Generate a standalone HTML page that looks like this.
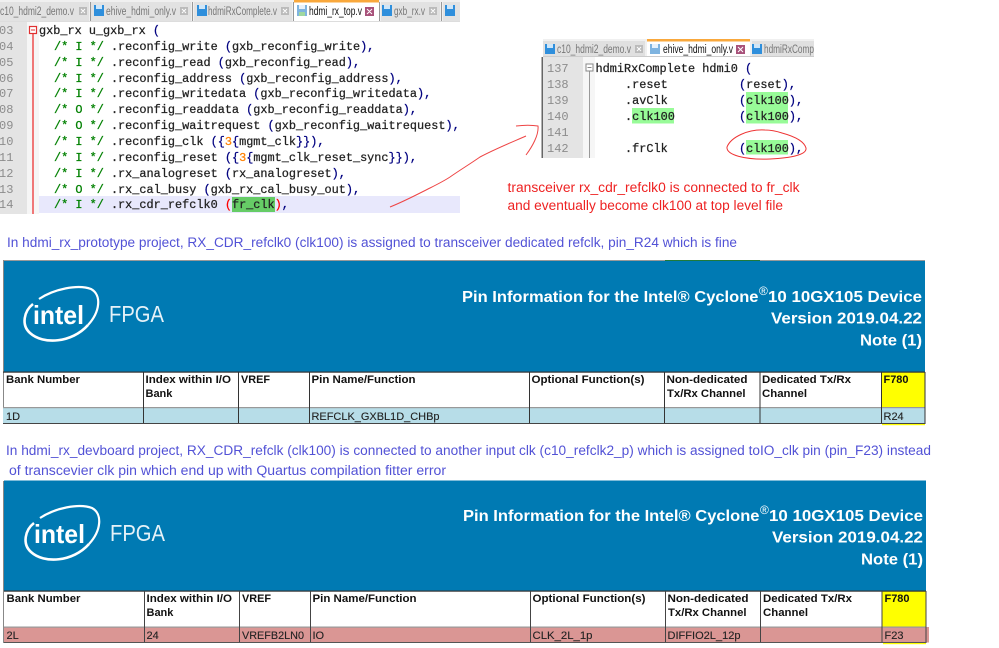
<!DOCTYPE html>
<html>
<head>
<meta charset="utf-8">
<style>
html,body{margin:0;padding:0;background:#fff;width:999px;height:648px;overflow:hidden}
svg{display:block;filter:blur(.3px)}
.m{font-family:"Liberation Mono",monospace;font-size:11.87px;fill:#222;stroke:#222;stroke-width:.25}
.c{fill:#008000;stroke:#008000}
.p{fill:#000080;stroke:#000080;stroke-width:.25}
.o{fill:#ff8000;stroke:#ff8000}
.n{font-family:"Liberation Mono",monospace;font-size:12px;fill:#8c8c8c}
.t{font-family:"Liberation Sans",sans-serif;font-size:11.5px;fill:#777}
.ta{font-family:"Liberation Sans",sans-serif;font-size:11.5px;fill:#111}
.r{font-family:"Liberation Sans",sans-serif;font-size:13.5px;fill:#ee2222}
.b{font-family:"Liberation Sans",sans-serif;font-size:13.5px;fill:#5252d6}
.h{font-family:"Liberation Sans",sans-serif;font-size:11px;font-weight:bold;fill:#111}
.d{font-family:"Liberation Sans",sans-serif;font-size:11px;fill:#222;stroke:#222;stroke-width:.12}
.w{font-family:"Liberation Sans",sans-serif;font-size:15.5px;font-weight:bold;fill:#fff}
.s{font-family:"Liberation Sans",sans-serif;font-size:12px;fill:#fff}
</style>
</head>
<body>
<svg width="999" height="648" viewBox="0 0 999 648" xmlns="http://www.w3.org/2000/svg">
<rect width="999" height="648" fill="#fff"/>

<!-- panel 1 tabs -->
<rect x="0" y="0" width="460" height="21" fill="#f0f0f0"/>
<rect x="0" y="2" width="89" height="19" fill="#e2e2e2"/>
<rect x="91" y="2" width="100" height="19" fill="#e2e2e2"/>
<rect x="194" y="2" width="98" height="19" fill="#e2e2e2"/>
<rect x="294" y="0" width="85" height="21" fill="#fff"/>
<rect x="294" y="0" width="85" height="2.5" fill="#f9a83c"/>
<rect x="381" y="2" width="59" height="19" fill="#e2e2e2"/>
<rect x="443" y="2" width="17" height="19" fill="#e2e2e2"/>
<g fill="#999"><rect x="90" y="2" width="1" height="19"/><rect x="192" y="2" width="1" height="19"/><rect x="293" y="2" width="1" height="19"/><rect x="379" y="2" width="1" height="19"/><rect x="441" y="2" width="1" height="19"/></g>
<rect x="94" y="5" width="10" height="11" fill="#2f8fdc"/><rect x="96" y="5" width="6" height="4" fill="#cfe6f8"/>
<rect x="197" y="5" width="10" height="11" fill="#2f8fdc"/><rect x="199" y="5" width="6" height="4" fill="#cfe6f8"/>
<rect x="297" y="5" width="10" height="11" fill="#7fb4e0"/><rect x="299" y="5" width="6" height="4" fill="#e8f2fb"/><rect x="299" y="12" width="6" height="4" fill="#9fd89f"/>
<rect x="382" y="5" width="10" height="11" fill="#2f8fdc"/><rect x="384" y="5" width="6" height="4" fill="#cfe6f8"/>
<rect x="445" y="5" width="10" height="11" fill="#2f8fdc"/><rect x="447" y="5" width="6" height="4" fill="#cfe6f8"/>
<text class="t" x="0" y="15" textLength="74" lengthAdjust="spacingAndGlyphs">c10_hdmi2_demo.v</text>
<text class="t" x="106" y="15" textLength="70" lengthAdjust="spacingAndGlyphs">ehive_hdmi_only.v</text>
<text class="t" x="208" y="15" textLength="69" lengthAdjust="spacingAndGlyphs">hdmiRxComplete.v</text>
<text class="ta" x="309" y="15" textLength="53" lengthAdjust="spacingAndGlyphs">hdmi_rx_top.v</text>
<text class="t" x="394" y="15" textLength="31" lengthAdjust="spacingAndGlyphs">gxb_rx.v</text>
<g fill="#bbb"><rect x="79" y="7" width="8" height="8"/><rect x="180" y="7" width="8" height="8"/><rect x="281" y="7" width="8" height="8"/><rect x="429" y="7" width="8" height="8"/></g>
<rect x="365" y="7" width="9" height="9" fill="#a8527a"/>
<g stroke="#fff" stroke-width="1"><path d="M81 9l4 4M85 9l-4 4M182 9l4 4M186 9l-4 4M283 9l4 4M287 9l-4 4M431 9l4 4M435 9l-4 4M367 9l5 5M372 9l-5 5"/></g>
<rect x="0" y="21" width="460" height="1" fill="#ddd"/>

<!-- panel 1 code -->
<rect x="0" y="22" width="27" height="192" fill="#e4e4e4"/>
<rect x="27" y="22" width="12" height="192" fill="#f6f6f6"/>
<rect x="39" y="196" width="421" height="17" fill="#e8e8fc"/>
<rect x="232" y="197" width="43" height="15" fill="#66cc66"/>
<rect x="32" y="34" width="2" height="180" fill="#f07878"/>
<rect x="29.5" y="26.5" width="7" height="7" fill="#fff" stroke="#e03030" stroke-width="1.2"/>
<rect x="31" y="29.5" width="4" height="1" fill="#e03030"/>
<text class="n" x="-1" y="34">03</text><text class="n" x="-1" y="50">04</text><text class="n" x="-1" y="66">05</text><text class="n" x="-1" y="82">06</text><text class="n" x="-1" y="97">07</text><text class="n" x="-1" y="113">08</text><text class="n" x="-1" y="129">09</text><text class="n" x="-1" y="145">10</text><text class="n" x="-1" y="161">11</text><text class="n" x="-1" y="177">12</text><text class="n" x="-1" y="193">13</text><text class="n" x="-1" y="208">14</text>
<text class="m" x="39" y="34" xml:space="preserve">gxb_rx u_gxb_rx <tspan class="p">(</tspan></text>
<text class="m" x="54" y="50" xml:space="preserve"><tspan class="c">/* I */</tspan> .reconfig_write <tspan class="p">(</tspan>gxb_reconfig_write<tspan class="p">),</tspan></text>
<text class="m" x="54" y="66" xml:space="preserve"><tspan class="c">/* I */</tspan> .reconfig_read <tspan class="p">(</tspan>gxb_reconfig_read<tspan class="p">),</tspan></text>
<text class="m" x="54" y="82" xml:space="preserve"><tspan class="c">/* I */</tspan> .reconfig_address <tspan class="p">(</tspan>gxb_reconfig_address<tspan class="p">),</tspan></text>
<text class="m" x="54" y="97" xml:space="preserve"><tspan class="c">/* I */</tspan> .reconfig_writedata <tspan class="p">(</tspan>gxb_reconfig_writedata<tspan class="p">),</tspan></text>
<text class="m" x="54" y="113" xml:space="preserve"><tspan class="c">/* O */</tspan> .reconfig_readdata <tspan class="p">(</tspan>gxb_reconfig_readdata<tspan class="p">),</tspan></text>
<text class="m" x="54" y="129" xml:space="preserve"><tspan class="c">/* O */</tspan> .reconfig_waitrequest <tspan class="p">(</tspan>gxb_reconfig_waitrequest<tspan class="p">),</tspan></text>
<text class="m" x="54" y="145" xml:space="preserve"><tspan class="c">/* I */</tspan> .reconfig_clk <tspan class="p">({</tspan><tspan class="o">3</tspan><tspan class="p">{</tspan>mgmt_clk<tspan class="p">}}),</tspan></text>
<text class="m" x="54" y="161" xml:space="preserve"><tspan class="c">/* I */</tspan> .reconfig_reset <tspan class="p">({</tspan><tspan class="o">3</tspan><tspan class="p">{</tspan>mgmt_clk_reset_sync<tspan class="p">}}),</tspan></text>
<text class="m" x="54" y="177" xml:space="preserve"><tspan class="c">/* I */</tspan> .rx_analogreset <tspan class="p">(</tspan>rx_analogreset<tspan class="p">),</tspan></text>
<text class="m" x="54" y="193" xml:space="preserve"><tspan class="c">/* O */</tspan> .rx_cal_busy <tspan class="p">(</tspan>gxb_rx_cal_busy_out<tspan class="p">),</tspan></text>
<text class="m" x="54" y="208" xml:space="preserve"><tspan class="c">/* I */</tspan> .rx_cdr_refclk0 <tspan style="fill:#f00;stroke:#f00">(</tspan>fr_clk<tspan style="fill:#f00;stroke:#f00">)</tspan><tspan class="p">,</tspan></text>

<!-- panel 2 tabs -->
<rect x="543" y="39" width="271" height="17" fill="#f0f0f0"/>
<rect x="543" y="41" width="102" height="15" fill="#e0e0e0"/>
<rect x="647" y="39" width="103" height="17" fill="#fff"/>
<rect x="647" y="39" width="103" height="2.5" fill="#f9a83c"/>
<rect x="752" y="41" width="62" height="15" fill="#e0e0e0"/>
<rect x="545" y="44" width="10" height="10" fill="#2f8fdc"/><rect x="547" y="44" width="6" height="4" fill="#cfe6f8"/>
<rect x="650" y="44" width="10" height="10" fill="#7fb4e0"/><rect x="652" y="44" width="6" height="4" fill="#e8f2fb"/>
<rect x="752" y="44" width="10" height="10" fill="#2f8fdc"/><rect x="754" y="44" width="6" height="4" fill="#cfe6f8"/>
<text class="t" x="557" y="53" textLength="74" lengthAdjust="spacingAndGlyphs">c10_hdmi2_demo.v</text>
<text class="ta" x="663" y="53" textLength="70" lengthAdjust="spacingAndGlyphs">ehive_hdmi_only.v</text>
<text class="t" x="764" y="53" textLength="50" lengthAdjust="spacingAndGlyphs">hdmiRxComp</text>
<rect x="635" y="45" width="8" height="8" fill="#bbb"/>
<rect x="736" y="45" width="9" height="9" fill="#a8527a"/>
<path d="M637 47l4 4M641 47l-4 4M738 47l5 5M743 47l-5 5" stroke="#fff" stroke-width="1"/>

<!-- panel 2 code -->
<rect x="542" y="57" width="41" height="101" fill="#e4e4e4"/>
<rect x="583" y="57" width="12" height="101" fill="#f6f6f6"/>
<rect x="541.5" y="57" width="1.5" height="101" fill="#666"/>
<rect x="543" y="56" width="271" height="1" fill="#ccc"/>
<rect x="589" y="71" width="1" height="87" fill="#999"/>
<rect x="586" y="64" width="7" height="7" fill="#fff" stroke="#888" stroke-width="1"/>
<rect x="587.5" y="67" width="4" height="1" fill="#888"/>
<rect x="746" y="92" width="42" height="16" fill="#98fb98"/>
<rect x="746" y="108" width="42" height="15.5" fill="#98fb98"/>
<rect x="632" y="108" width="42" height="15.5" fill="#98fb98"/>
<rect x="746" y="140" width="42" height="14.5" fill="#98fb98"/>
<text class="n" x="547" y="72">137</text><text class="n" x="547" y="88">138</text><text class="n" x="547" y="104">139</text><text class="n" x="547" y="120">140</text><text class="n" x="547" y="136">141</text><text class="n" x="547" y="152">142</text>
<text class="m" x="595.5" y="72" xml:space="preserve">hdmiRxComplete hdmi0 <tspan class="p">(</tspan></text>
<text class="m" x="625" y="88">.reset</text>
<text class="m" x="739" y="88" xml:space="preserve"><tspan class="p">(</tspan>reset<tspan class="p">),</tspan></text>
<text class="m" x="625" y="104">.avClk</text>
<text class="m" x="739" y="104" xml:space="preserve"><tspan class="p">(</tspan>clk100<tspan class="p">),</tspan></text>
<text class="m" x="625" y="120">.clk100</text>
<text class="m" x="739" y="120" xml:space="preserve"><tspan class="p">(</tspan>clk100<tspan class="p">),</tspan></text>
<text class="m" x="625" y="152">.frClk</text>
<text class="m" x="739" y="152" xml:space="preserve"><tspan class="p">(</tspan>clk100<tspan class="p">),</tspan></text>

<!-- red annotations -->
<path d="M390 207C405 201 418 194 430 188C438 184 444 181 450 177C460 170 470 164 480 157C495 149 510 143 526 136" fill="none" stroke="#ee4444" stroke-width="1"/>
<path d="M516 126C524 125 532 125 538 126C539 135 532 147 526 155" fill="none" stroke="#ee4444" stroke-width="1"/>
<path d="M765 130C748 129 731 137 727 147C726 155 745 160 770 159C790 158 807 155 806 148C804 141 793 136 782 133C776 131 770 130 765 130Z" fill="none" stroke="#ee3333" stroke-width="1"/>
<text class="r" x="507.5" y="192" textLength="292" lengthAdjust="spacingAndGlyphs">transceiver rx_cdr_refclk0 is connected to fr_clk</text>
<text class="r" x="507.5" y="210" textLength="275.5" lengthAdjust="spacingAndGlyphs">and eventually become clk100 at top level file</text>

<text class="b" x="7" y="247" textLength="730" lengthAdjust="spacingAndGlyphs">In hdmi_rx_prototype project, RX_CDR_refclk0 (clk100) is assigned to transceiver dedicated refclk, pin_R24 which is fine</text>

<!-- table 1 -->
<rect x="3" y="260" width="922" height="1.5" fill="#999"/>
<rect x="665" y="260" width="95" height="1.5" fill="#1f7a3a"/>
<rect x="3" y="261" width="922" height="111" fill="#007ab3"/>
<rect x="3" y="260" width="1" height="164" fill="#888"/>
<path d="M33 304C24 311 21 325 30 333C43 345 72 343 88 325" fill="none" stroke="#fff" stroke-width="2.6"/>
<path d="M39 299C54 289 78 284 91 289C102 295 100 312 88 325" fill="none" stroke="#fff" stroke-width="2.2"/>
<text x="33" y="324" font-family="Liberation Sans,sans-serif" font-size="26" font-weight="bold" fill="#fff" textLength="51" lengthAdjust="spacingAndGlyphs">intel</text>
<text x="109" y="322" font-family="Liberation Sans,sans-serif" font-size="23" fill="#e6f2f8" textLength="55" lengthAdjust="spacingAndGlyphs">FPGA</text>
<text class="w" x="462" y="302" textLength="296.5" lengthAdjust="spacingAndGlyphs">Pin Information for the Intel® Cyclone</text>
<text class="s" x="759" y="295">®</text>
<text class="w" x="768" y="302" textLength="154" lengthAdjust="spacingAndGlyphs">10 10GX105 Device</text>
<text class="w" x="771" y="323.5" textLength="151" lengthAdjust="spacingAndGlyphs">Version 2019.04.22</text>
<text class="w" x="860" y="345.5" textLength="62" lengthAdjust="spacingAndGlyphs">Note (1)</text>

<rect x="881" y="372" width="44" height="35" fill="#ffff00"/>
<rect x="3" y="407.5" width="922" height="16" fill="#b7dde8"/>
<rect x="3" y="371.5" width="922" height="1.2" fill="#333"/>
<rect x="3" y="407" width="922" height="1.2" fill="#999"/>
<g fill="#333">
<rect x="143" y="372" width="1" height="52"/><rect x="238" y="372" width="1" height="52"/><rect x="309" y="372" width="1" height="52"/><rect x="529" y="372" width="1" height="52"/><rect x="664" y="372" width="1" height="52"/><rect x="759.5" y="372" width="1" height="52"/><rect x="881" y="372" width="1" height="52"/><rect x="924.5" y="372" width="1" height="52"/>
</g>
<rect x="3" y="423" width="922" height="1" fill="#444"/>
<rect x="882" y="424" width="43" height="1.2" fill="#ffff00"/>
<text class="h" x="6" y="383" textLength="74" lengthAdjust="spacingAndGlyphs">Bank Number</text>
<text class="h" x="145.5" y="383" textLength="85.5" lengthAdjust="spacingAndGlyphs">Index within I/O</text>
<text class="h" x="145.5" y="397">Bank</text>
<text class="h" x="241" y="383" textLength="29" lengthAdjust="spacingAndGlyphs">VREF</text>
<text class="h" x="311.5" y="383" textLength="104" lengthAdjust="spacingAndGlyphs">Pin Name/Function</text>
<text class="h" x="531.5" y="383" textLength="113" lengthAdjust="spacingAndGlyphs">Optional Function(s)</text>
<text class="h" x="666.5" y="383" textLength="81" lengthAdjust="spacingAndGlyphs">Non-dedicated</text>
<text class="h" x="667" y="397" textLength="78.5" lengthAdjust="spacingAndGlyphs">Tx/Rx Channel</text>
<text class="h" x="762" y="383" textLength="89" lengthAdjust="spacingAndGlyphs">Dedicated Tx/Rx</text>
<text class="h" x="762" y="397" textLength="45" lengthAdjust="spacingAndGlyphs">Channel</text>
<text class="h" x="883.5" y="383" textLength="25" lengthAdjust="spacingAndGlyphs">F780</text>
<text class="d" x="6" y="420">1D</text>
<text class="d" x="311.5" y="420" textLength="128" lengthAdjust="spacingAndGlyphs">REFCLK_GXBL1D_CHBp</text>
<text class="d" x="883.5" y="420">R24</text>

<text class="b" x="6" y="455" textLength="925" lengthAdjust="spacingAndGlyphs">In hdmi_rx_devboard project, RX_CDR_refclk (clk100) is connected to another input clk (c10_refclk2_p) which is assigned toIO_clk pin (pin_F23) instead</text>
<text class="b" x="9" y="475" textLength="437" lengthAdjust="spacingAndGlyphs">of transcevier clk pin which end up with Quartus compilation fitter error</text>

<!-- table 2 -->
<rect x="4" y="480.5" width="922" height="110.5" fill="#007ab3"/>
<rect x="3" y="481" width="1" height="162" fill="#888"/>
<path d="M34 523C25 530 22 544 31 552C44 564 73 562 89 544" fill="none" stroke="#fff" stroke-width="2.6"/>
<path d="M40 518C55 508 79 503 92 508C103 514 101 531 89 544" fill="none" stroke="#fff" stroke-width="2.2"/>
<text x="34" y="543" font-family="Liberation Sans,sans-serif" font-size="26" font-weight="bold" fill="#fff" textLength="51" lengthAdjust="spacingAndGlyphs">intel</text>
<text x="110" y="541" font-family="Liberation Sans,sans-serif" font-size="23" fill="#e6f2f8" textLength="55" lengthAdjust="spacingAndGlyphs">FPGA</text>
<text class="w" x="463" y="521" textLength="296.5" lengthAdjust="spacingAndGlyphs">Pin Information for the Intel® Cyclone</text>
<text class="s" x="760" y="514">®</text>
<text class="w" x="769" y="521" textLength="154" lengthAdjust="spacingAndGlyphs">10 10GX105 Device</text>
<text class="w" x="772" y="542.5" textLength="151" lengthAdjust="spacingAndGlyphs">Version 2019.04.22</text>
<text class="w" x="861" y="564.5" textLength="62" lengthAdjust="spacingAndGlyphs">Note (1)</text>

<rect x="882" y="591" width="44" height="36" fill="#ffff00"/>
<rect x="4" y="627" width="925" height="15.5" fill="#da9694"/>
<rect x="4" y="590.5" width="922" height="1.2" fill="#333"/>
<rect x="4" y="626.5" width="922" height="1.2" fill="#999"/>
<g fill="#444">
<rect x="144" y="591" width="1" height="52"/><rect x="239" y="591" width="1" height="52"/><rect x="310" y="591" width="1" height="52"/><rect x="530" y="591" width="1" height="52"/><rect x="665" y="591" width="1" height="52"/><rect x="760" y="591" width="1" height="52"/><rect x="881.5" y="591" width="1" height="52"/><rect x="925.5" y="591" width="1" height="52"/>
</g>
<rect x="4" y="642" width="922" height="1" fill="#555"/>
<rect x="883" y="643" width="43" height="1.2" fill="#ffff00"/>
<text class="h" x="6.5" y="602" textLength="74" lengthAdjust="spacingAndGlyphs">Bank Number</text>
<text class="h" x="146.5" y="602" textLength="85.5" lengthAdjust="spacingAndGlyphs">Index within I/O</text>
<text class="h" x="146.5" y="616">Bank</text>
<text class="h" x="242" y="602" textLength="29" lengthAdjust="spacingAndGlyphs">VREF</text>
<text class="h" x="312.5" y="602" textLength="104" lengthAdjust="spacingAndGlyphs">Pin Name/Function</text>
<text class="h" x="532.5" y="602" textLength="113" lengthAdjust="spacingAndGlyphs">Optional Function(s)</text>
<text class="h" x="667.5" y="602" textLength="81" lengthAdjust="spacingAndGlyphs">Non-dedicated</text>
<text class="h" x="668" y="616" textLength="78.5" lengthAdjust="spacingAndGlyphs">Tx/Rx Channel</text>
<text class="h" x="763" y="602" textLength="89" lengthAdjust="spacingAndGlyphs">Dedicated Tx/Rx</text>
<text class="h" x="763" y="616" textLength="45" lengthAdjust="spacingAndGlyphs">Channel</text>
<text class="h" x="884.5" y="602" textLength="25" lengthAdjust="spacingAndGlyphs">F780</text>
<text class="d" x="6.5" y="639">2L</text>
<text class="d" x="146.5" y="639">24</text>
<text class="d" x="242" y="639" textLength="62" lengthAdjust="spacingAndGlyphs">VREFB2LN0</text>
<text class="d" x="312.5" y="639">IO</text>
<text class="d" x="532.5" y="639" textLength="60" lengthAdjust="spacingAndGlyphs">CLK_2L_1p</text>
<text class="d" x="667.5" y="639" textLength="73" lengthAdjust="spacingAndGlyphs">DIFFIO2L_12p</text>
<text class="d" x="884.5" y="639">F23</text>
</svg>
</body>
</html>
